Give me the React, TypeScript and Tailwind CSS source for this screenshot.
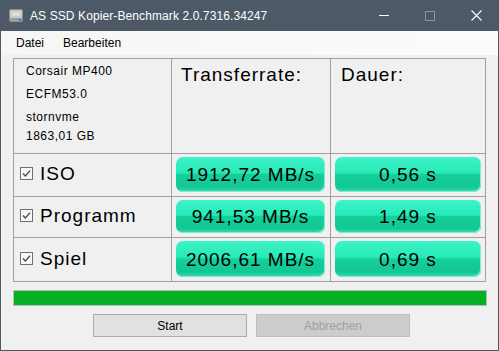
import { Fragment } from "react";

const font = { fontFamily: '"Liberation Sans", Arial, sans-serif' };

function DriveIcon() {
  return (
    <svg width="16" height="16" viewBox="0 0 16 16">
      <rect x="1.5" y="1.5" width="13" height="12" rx="1.5" fill="#c9c9c9" stroke="#8d8d8d" />
      <rect x="2" y="10" width="12" height="3.5" fill="#9c9c9c" />
      <rect x="4" y="4" width="8" height="4" rx="1" fill="#dcdcdc" />
      <rect x="11" y="11" width="2" height="1.5" fill="#3a5bd9" />
    </svg>
  );
}

function CheckBox() {
  return (
    <svg width="13" height="13" viewBox="0 0 13 13" className="shrink-0">
      <rect x="0.5" y="0.5" width="12" height="12" fill="#f7f7f7" stroke="#6f6f6f" />
      <path d="M3 6.5 L5.3 9 L10 3.8" fill="none" stroke="#4a4a4a" strokeWidth="1.3" />
    </svg>
  );
}

function GreenValue({ value }: { value: string }) {
  return (
    <div className="flex h-full w-full items-center justify-center overflow-hidden rounded-[7px] bg-[linear-gradient(to_bottom,#3ef3c8_0%,#26eab6_46%,#16cf9b_50%,#12c794_86%,#3fdcb2_100%)] shadow-[inset_-1px_-1px_0_#7fecd0]">
      <span className="text-[19px] leading-none tracking-[1px] text-black" style={font}>
        {value}
      </span>
    </div>
  );
}

const rows = [
  { label: "ISO", rate: "1912,72 MB/s", time: "0,56 s", h: "h-[42px]" },
  { label: "Programm", rate: "941,53 MB/s", time: "1,49 s", h: "h-[40px]" },
  { label: "Spiel", rate: "2006,61 MB/s", time: "0,69 s", h: "h-[43px]" },
];

export default function App() {
  return (
    <div className="flex h-[351px] w-[499px] flex-col bg-[#4e5967]" style={font}>
      {/* title bar */}
      <div className="flex h-[31px] shrink-0 items-center text-[12px] text-white">
        <div className="ml-[8px] mr-[6px]">
          <DriveIcon />
        </div>
        <span className="tracking-[0.1px]">AS SSD Kopier-Benchmark 2.0.7316.34247</span>
        <div className="ml-auto flex h-full items-center">
          <div className="flex h-full w-[46px] items-center justify-center">
            <div className="h-px w-[10px] bg-white" />
          </div>
          <div className="flex h-full w-[46px] items-center justify-center">
            <div className="h-[10px] w-[10px] border border-[#8a939e]" />
          </div>
          <div className="flex h-full w-[46px] items-center justify-center">
            <svg width="11" height="11" viewBox="0 0 11 11">
              <path d="M0.5 0.5 L10.5 10.5 M10.5 0.5 L0.5 10.5" stroke="#fff" strokeWidth="1.1" />
            </svg>
          </div>
        </div>
      </div>

      <div className="mx-px mb-px flex flex-1 flex-col bg-[#f0f0f0]">
        {/* menu */}
        <div className="flex h-[24px] items-center bg-[linear-gradient(to_right,#f6f6f6,#fbfbfb)] text-[12px] text-black">
          <span className="ml-[15px]">Datei</span>
          <span className="ml-[19px]">Bearbeiten</span>
        </div>

        {/* table */}
        <div className="ml-[12px] mt-[3px] grid w-[473px] grid-cols-[157px_158px_154px] gap-px border border-[#a0a0a0] bg-[#a0a0a0]">
          <div className="flex h-[94px] flex-col bg-[#f0f0f0] pl-[12px] pt-[5px] text-[12px] tracking-[0.5px] text-black">
            <span className="leading-[14px]">Corsair MP400</span>
            <span className="mt-[9px] leading-[14px]">ECFM53.0</span>
            <span className="mt-[9px] leading-[14px]">stornvme</span>
            <span className="mt-[5px] leading-[14px]">1863,01 GB</span>
          </div>
          <div className="h-[94px] bg-[#f0f0f0] pl-[9px] pt-[5px] text-[19px] leading-[22px] tracking-[1px] text-black">
            Transferrate:
          </div>
          <div className="h-[94px] bg-[#f0f0f0] pl-[10px] pt-[5px] text-[19px] leading-[22px] tracking-[1px] text-black">
            Dauer:
          </div>
          {rows.map((r) => (
            <Fragment key={r.label}>
              <div className={`flex items-center bg-[#f0f0f0] pb-[3px] pl-[6px] ${r.h}`}>
                <CheckBox />
                <span className="ml-[7px] text-[19px] leading-none tracking-[1px] text-black">{r.label}</span>
              </div>
              <div className={`bg-[#f0f0f0] pb-[4px] pl-[4px] pr-[5px] pt-[3px] ${r.h}`}>
                <GreenValue value={r.rate} />
              </div>
              <div className={`bg-[#f0f0f0] pb-[4px] pl-[4px] pr-[4px] pt-[3px] ${r.h}`}>
                <GreenValue value={r.time} />
              </div>
            </Fragment>
          ))}
        </div>

        {/* progress */}
        <div className="ml-[12px] mt-[8px] h-[16px] w-[474px] border border-[#bcbcbc] bg-[#e6e6e6]">
          <div className="h-full w-full bg-[#06b025]" />
        </div>

        {/* buttons */}
        <div className="mt-[8px] flex gap-[9px] pl-[92px]">
          <div className="flex h-[23px] w-[154px] items-center justify-center border border-[#adadad] bg-[#e1e1e1] text-[12px] text-black">
            Start
          </div>
          <div className="flex h-[23px] w-[154px] items-center justify-center border border-[#bfbfbf] bg-[#cccccc] text-[12px] text-[#a0a0a0]">
            Abbrechen
          </div>
        </div>
      </div>
    </div>
  );
}
